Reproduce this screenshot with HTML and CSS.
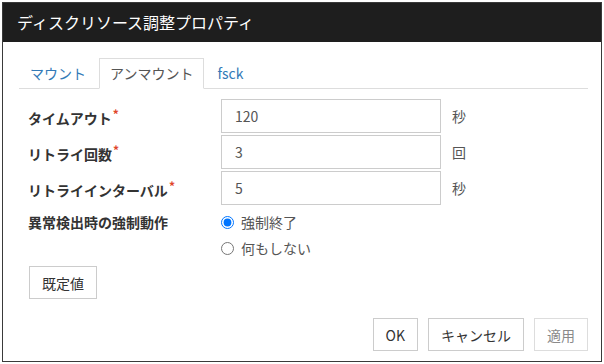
FILE: index.html
```html
<!DOCTYPE html>
<html lang="ja">
<head>
<meta charset="utf-8">
<title>ディスクリソース調整プロパティ</title>
<link rel="stylesheet" href="styles.css">
</head>
<body>
<div class="dialog">
  <div class="header">ディスクリソース調整プロパティ</div>
  <div class="content">
    <div class="tabs">
      <div class="tab link">マウント</div>
      <div class="tab active">アンマウント</div>
      <div class="tab link">fsck</div>
    </div>
    <div class="form">
      <div class="row">
        <div class="label">タイムアウト<span class="req">*</span></div>
        <input class="field" type="text" value="120">
        <span class="unit">秒</span>
      </div>
      <div class="row">
        <div class="label">リトライ回数<span class="req">*</span></div>
        <input class="field" type="text" value="3">
        <span class="unit">回</span>
      </div>
      <div class="row">
        <div class="label">リトライインターバル<span class="req">*</span></div>
        <input class="field" type="text" value="5">
        <span class="unit">秒</span>
      </div>
      <div class="radio-row">
        <div class="label rlabel">異常検出時の強制動作</div>
        <div class="radios">
          <label class="opt"><input type="radio" name="act" checked><span>強制終了</span></label>
          <label class="opt"><input type="radio" name="act"><span>何もしない</span></label>
        </div>
      </div>
      <button class="btn default-btn">既定値</button>
    </div>
  </div>
  <div class="footer">
    <button class="btn ok">OK</button>
    <button class="btn">キャンセル</button>
    <button class="btn disabled">適用</button>
  </div>
</div>
</body>
</html>
```
FILE: styles.css
```css
html, body {
  margin: 0;
  padding: 0;
  background: #ffffff;
}
body {
  font-family: "Noto Sans CJK JP", "Noto Sans", sans-serif;
  font-size: 14px;
  color: #333;
}
.dialog {
  margin: 2px;
  width: 600px;
  height: 360px;
  box-sizing: border-box;
  border: 1px solid #3a3a3a;
  display: flex;
  flex-direction: column;
  background: #fff;
}
.header {
  height: 39px;
  background: #1e1e1e;
  color: #fff;
  font-size: 16px;
  line-height: 39px;
  padding-left: 14px;
}
.content {
  flex: 1;
  padding: 16px 13px 0 16px;
}
.tabs {
  display: flex;
  height: 30px;
  border-bottom: 1px solid #ddd;
}
.tab {
  height: 31px;
  box-sizing: border-box;
  border: 1px solid transparent;
  margin-bottom: -1px;
  margin-right: 2px;
  padding: 0 10px;
  line-height: 28px;
}
.tab.link {
  color: #337ab7;
}
.tab.active {
  color: #555;
  border-color: #ddd;
  border-bottom-color: #fff;
  background: #fff;
}
.form {
  margin-top: 10px;
  padding-left: 9px;
}
.row {
  display: flex;
  align-items: center;
  height: 34px;
  margin-bottom: 2px;
}
.label {
  width: 193px;
  font-weight: bold;
  color: #333;
}
.req {
  color: #e0452b;
  font-size: 12px;
  vertical-align: 5px;
  font-weight: bold;
  margin-left: 1px;
}
.field {
  width: 220px;
  height: 34px;
  box-sizing: border-box;
  border: 1px solid #ccc;
  padding: 0 13px;
  font-family: "Noto Sans CJK JP", "Noto Sans", sans-serif;
  font-size: 14px;
  color: #555;
  margin: 0;
  outline: none;
}
.unit {
  margin-left: 11px;
  color: #555;
}
.radio-row {
  display: flex;
  margin-top: 4px;
}
.rlabel {
  line-height: 26px;
}
.radios {
  display: flex;
  flex-direction: column;
}
.opt {
  display: flex;
  align-items: center;
  height: 26px;
  color: #555;
}
.opt input {
  margin: 0 7px 0 0;
  width: 13px;
  height: 13px;
}
.btn {
  font-family: "Noto Sans CJK JP", "Noto Sans", sans-serif;
  font-size: 14px;
  color: #333;
  background: #fff;
  border: 1px solid #ccc;
  height: 33px;
  padding: 0 12px;
  margin: 0;
}
.default-btn {
  margin-top: 5px;
  margin-left: 1px;
}
.footer {
  display: flex;
  justify-content: flex-end;
  gap: 10px;
  padding: 0 13px 10px 0;
}
.btn.disabled {
  color: #8a8a8a;
  border-color: #ddd;
}
```
